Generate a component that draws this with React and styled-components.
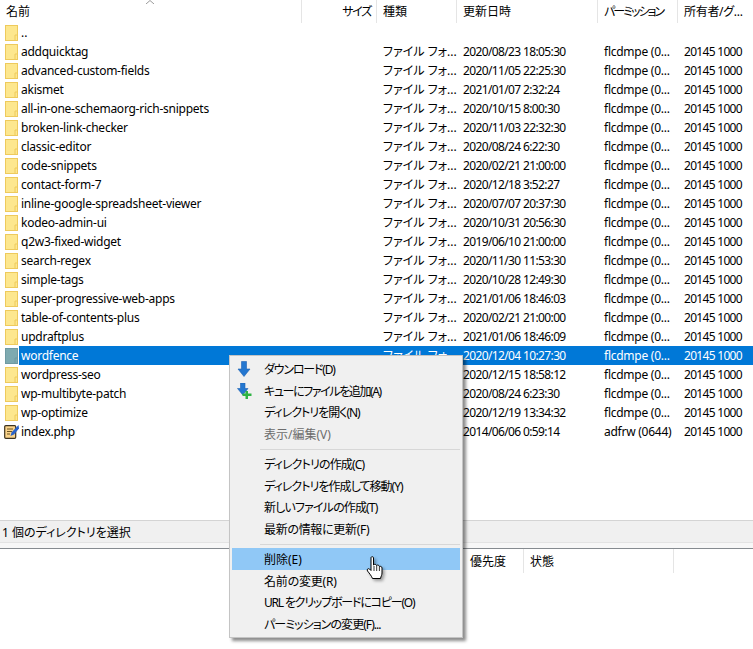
import styled, { createGlobalStyle } from "styled-components"

const GlobalStyle = createGlobalStyle`
    html, body {
        margin: 0;
        padding: 0;
        background: #ffffff;
    }
`
const Page = styled.div`
    position: relative;
    display: flex;
    flex-direction: column;
    width: 753px;
    height: 649px;
    overflow: hidden;
    background: #ffffff;
    color: #000000;
    font-family: "Noto Sans", "Noto Sans CJK JP", sans-serif;
    font-size: 12px;
    font-feature-settings: "palt";
`
const Header = styled.div`
    display: grid;
    grid-template-columns: 302px 75px 80px 141px 80px 75px;
    height: 23px;
    flex-shrink: 0;
`
const HeadCell = styled.div`
    position: relative;
    height: 23px;
    line-height: 23px;
    padding: 0 ${({$right}) => $right ? "5px" : "0"} 0 6px;
    box-sizing: border-box;
    border-right: 1px solid ${({$last}) => $last ? "transparent" : "#e5e5e5"};
    text-align: ${({$right}) => $right ? "right" : "left"};
    letter-spacing: ${({$track}) => $track || 0}px;
    white-space: nowrap;
    overflow: hidden;
`
const SortArrow = styled.svg`
    position: absolute;
    top: 0;
    left: 145px;
`
const List = styled.div`
    flex: 1;
`
const Row = styled.div`
    display: flex;
    height: 19px;
    line-height: 20px;
`
const IconSlot = styled.div`
    width: 19px;
    flex-shrink: 0;
    display: flex;
    align-items: center;
    padding-left: ${({$file}) => $file ? "4px" : "5px"};
    box-sizing: border-box;
`
const Cells = styled.div`
    flex: 1;
    display: grid;
    grid-template-columns: 283px 75px 80px 141px 80px 75px;
    background: ${({$selected}) => $selected ? "#0078d7" : "transparent"};
    color: ${({$selected}) => $selected ? "#ffffff" : "#000000"};
`
const Cell = styled.div`
    padding-left: ${({$name}) => $name ? "2px" : "6px"};
    letter-spacing: ${({$track}) => $track || 0}px;
    white-space: nowrap;
    overflow: hidden;
`
const StatusBar = styled.div`
    height: 23px;
    line-height: 24px;
    flex-shrink: 0;
    box-sizing: border-box;
    padding-left: 2px;
    background: #f0f0f0;
    border-top: 1px solid #d4d4d4;
    border-bottom: 1px solid #e3e3e3;
`
const Gap = styled.div`
    height: 5px;
    flex-shrink: 0;
    background: #f7f7f7;
    border-bottom: 1px solid #868b90;
`
const QueueHeader = styled.div`
    display: flex;
    height: 100px;
    flex-shrink: 0;
`
const QueueSpacer = styled.div`
    width: 464px;
`
const QueueCell = styled.div`
    width: ${({$w}) => $w}px;
    height: 24px;
    line-height: 26px;
    padding-left: 6px;
    box-sizing: border-box;
    border-right: 1px solid #e5e5e5;
`
const Menu = styled.div`
    position: absolute;
    top: 355px;
    left: 229px;
    width: 234px;
    height: 283px;
    box-sizing: border-box;
    padding: 2px;
    background: #f0f0f0;
    border: 1px solid #c4c4c4;
    box-shadow: 3px 3px 3px rgba(0, 0, 0, 0.45);
`
const MenuItem = styled.div`
    display: flex;
    align-items: center;
    height: 21.75px;
    background: ${({$active}) => $active ? "#90c8f6" : "transparent"};
    color: ${({$disabled}) => $disabled ? "#6d6d6d" : "#000000"};
    letter-spacing: ${({$track}) => $track || 0}px;
    white-space: nowrap;
`
const MenuIcon = styled.div`
    width: 32px;
    flex-shrink: 0;
    display: flex;
    align-items: center;
    padding-left: 5px;
    box-sizing: border-box;
`
const Separator = styled.div`
    height: 1px;
    margin: 3.5px 0 3.5px 28px;
    background: #d7d7d7;
`
const Cursor = styled.svg`
    position: absolute;
    left: 136px;
    top: 200px;
    filter: drop-shadow(2px 2px 1.5px rgba(0, 0, 0, 0.35));
`

const FolderIcon = ({selected}) => (
    <svg width="13" height="16" viewBox="0 0 13 16">
        <rect x="0.5" y="0.5" width="12" height="15" fill={selected ? "#7eaab0" : "#fde78e"} stroke={selected ? "#6f9aa2" : "#eeca5c"} />
        <path d="M10 15.5 V10 H12.5" fill="none" stroke={selected ? "#6f9aa2" : "#eeca5c"} />
    </svg>
)

const PhpIcon = () => (
    <svg width="15" height="16" viewBox="0 0 15 16">
        <rect x="0.7" y="1.7" width="11" height="12.6" rx="1" fill="#fbd48a" stroke="#3d3320" strokeWidth="1.2" />
        <path d="M3 5 H9 M3 7.5 H8 M3 10 H6" stroke="#6d5423" strokeWidth="1" />
        <path d="M14.5 1 L7.5 8.5 L6.5 12 L10 10.6 L15 4.5 Z" fill="#2a63c9" />
    </svg>
)

const DownloadIcon = () => (
    <svg width="14" height="16" viewBox="0 0 14 16">
        <path d="M4.5 0.5 H9.5 V8 H13 L7 15.5 L1 8 H4.5 Z" fill="#2477d0" stroke="#1c62b4" strokeWidth="0.6" />
    </svg>
)

const QueueIcon = () => (
    <svg width="15" height="16" viewBox="0 0 15 16">
        <path d="M3.5 0 H8 V5.5 H11 L5.8 12 L0.5 5.5 H3.5 Z" fill="#2477d0" stroke="#1c62b4" strokeWidth="0.6" />
        <path d="M8.5 8 H11 V10.5 H14.5 V13 H11 V16 H8.5 V13 H5.5 V10.5 H8.5 Z" fill="#2fb344" />
    </svg>
)

const columns = [
    {label: "名前", arrow: true},
    {label: "サイズ", right: true, track: -1.3},
    {label: "種類"},
    {label: "更新日時"},
    {label: "パーミッション", track: -2},
    {label: "所有者/グ...", last: true, track: -0.3},
]

const rows = [
    ["addquicktag", "2020/08/23 18:05:30"],
    ["advanced-custom-fields", "2020/11/05 22:25:30"],
    ["akismet", "2021/01/07 2:32:24"],
    ["all-in-one-schemaorg-rich-snippets", "2020/10/15 8:00:30"],
    ["broken-link-checker", "2020/11/03 22:32:30"],
    ["classic-editor", "2020/08/24 6:22:30"],
    ["code-snippets", "2020/02/21 21:00:00"],
    ["contact-form-7", "2020/12/18 3:52:27"],
    ["inline-google-spreadsheet-viewer", "2020/07/07 20:37:30"],
    ["kodeo-admin-ui", "2020/10/31 20:56:30"],
    ["q2w3-fixed-widget", "2019/06/10 21:00:00"],
    ["search-regex", "2020/11/30 11:53:30"],
    ["simple-tags", "2020/10/28 12:49:30"],
    ["super-progressive-web-apps", "2021/01/06 18:46:03"],
    ["table-of-contents-plus", "2020/02/21 21:00:00"],
    ["updraftplus", "2021/01/06 18:46:09"],
    ["wordfence", "2020/12/04 10:27:30"],
    ["wordpress-seo", "2020/12/15 18:58:12"],
    ["wp-multibyte-patch", "2020/08/24 6:23:30"],
    ["wp-optimize", "2020/12/19 13:34:32"],
]

const menuGroups = [
    [
        {label: "ダウンロード(D)", icon: <DownloadIcon />, track: -1.2},
        {label: "キューにファイルを追加(A)", icon: <QueueIcon />, track: -1.4},
        {label: "ディレクトリを開く(N)", track: -1},
        {label: "表示/編集(V)", disabled: true},
    ],
    [
        {label: "ディレクトリの作成(C)", track: -0.85},
        {label: "ディレクトリを作成して移動(Y)", track: -0.95},
        {label: "新しいファイルの作成(T)", track: -0.85},
        {label: "最新の情報に更新(F)", track: -0.3},
    ],
    [
        {label: "削除(E)", active: true},
        {label: "名前の変更(R)", track: -0.2},
        {label: "URL をクリップボードにコピー(O)", track: -1.2},
        {label: "パーミッションの変更(F)...", track: -0.95},
    ],
]

const App = () => {
    return(
        <Page>
            <GlobalStyle />
            <Header>
                {columns.map((c) => (
                    <HeadCell key={c.label} $right={c.right} $last={c.last} $track={c.track}>
                        {c.label}
                        {c.arrow && (
                            <SortArrow width="10" height="4" viewBox="0 0 10 4">
                                <path d="M1 4 L5 0.5 L9 4" fill="none" stroke="#9a9a9a" />
                            </SortArrow>
                        )}
                    </HeadCell>
                ))}
            </Header>
            <List>
                <Row>
                    <IconSlot><FolderIcon /></IconSlot>
                    <Cells><Cell $name>..</Cell></Cells>
                </Row>
                {rows.map(([name, date]) => {
                    const selected = name === "wordfence"
                    return (
                        <Row key={name}>
                            <IconSlot><FolderIcon selected={selected} /></IconSlot>
                            <Cells $selected={selected}>
                                <Cell $name $track={-0.25}>{name}</Cell>
                                <Cell />
                                <Cell>ファイル フォ...</Cell>
                                <Cell $track={-0.63}>{date}</Cell>
                                <Cell $track={-0.25}>flcdmpe (0...</Cell>
                                <Cell $track={-0.7}>20145 1000</Cell>
                            </Cells>
                        </Row>
                    )
                })}
                <Row>
                    <IconSlot $file><PhpIcon /></IconSlot>
                    <Cells>
                        <Cell $name $track={-0.25}>index.php</Cell>
                        <Cell />
                        <Cell />
                        <Cell $track={-0.63}>2014/06/06 0:59:14</Cell>
                        <Cell $track={-0.25}>adfrw (0644)</Cell>
                        <Cell $track={-0.7}>20145 1000</Cell>
                    </Cells>
                </Row>
            </List>
            <StatusBar>1 個のディレクトリを選択</StatusBar>
            <Gap />
            <QueueHeader>
                <QueueSpacer />
                <QueueCell $w={60}>優先度</QueueCell>
                <QueueCell $w={150}>状態</QueueCell>
            </QueueHeader>
            <Menu>
                {menuGroups.map((group, i) => (
                    <div key={i}>
                        {i > 0 && <Separator />}
                        {group.map((item) => (
                            <MenuItem key={item.label} $active={item.active} $disabled={item.disabled} $track={item.track}>
                                <MenuIcon>{item.icon}</MenuIcon>
                                {item.label}
                            </MenuItem>
                        ))}
                    </div>
                ))}
                <Cursor width="19" height="24" viewBox="0 0 19 24">
                    <path d="M5 1.5 C5 0.5 7.5 0.5 7.5 1.5 V9 C8.5 8 10 8 10.5 9.5 C11.5 8.7 13 9 13.3 10.5 C14.5 10 16 10.5 16 12 V17 C16 19 15 20 14.5 22.5 H6.5 C5.5 20 3.5 17.5 1.5 15 C0.5 13.5 2 12 3.5 13 L5 14.5 Z" fill="#ffffff" stroke="#000000" strokeWidth="1" strokeLinejoin="round" />
                    <path d="M8 10 V15 M10.7 10 V15 M13.4 11 V15" stroke="#000000" strokeWidth="0.8" />
                </Cursor>
            </Menu>
        </Page>
    )
}

export default App
